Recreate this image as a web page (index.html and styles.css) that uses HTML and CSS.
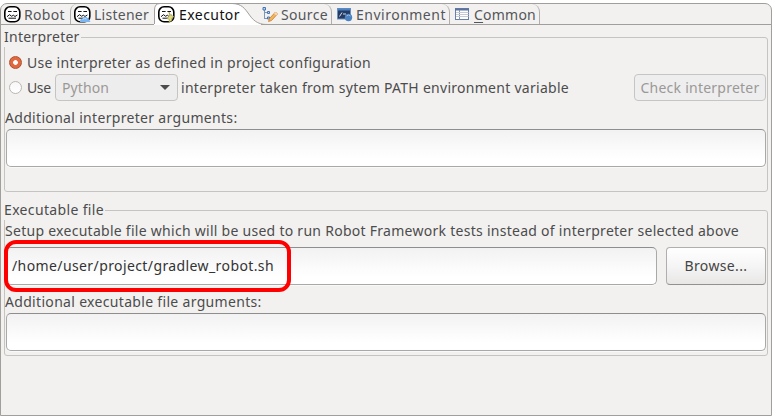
FILE: index.html
```html
<!DOCTYPE html>
<html lang="en">
<head>
<meta charset="utf-8">
<title>Executor</title>
<link rel="stylesheet" href="styles.css">
</head>
<body>
<svg class="defs" width="0" height="0">
  <symbol id="robot" viewBox="0 0 17 17">
    <rect x=".8" y=".8" width="15" height="15" rx="5.3" fill="#fff" stroke="#000" stroke-width="1.6"/>
    <path d="M4 5.500h3.600M9.400 5.500h3.600" fill="none" stroke="#111" stroke-width="1.100"/>
    <path d="M3 10.700 5.500 8.700l2.200 1.600 1.600-1.100 1.700 1.300 2.400-1.500M4.500 12.200h7.500" fill="none" stroke="#111"/>
  </symbol>
</svg>
<main class="panel">
  <nav class="tabs">
    <div class="tab robot"><svg class="icon" width="17" height="17"><use href="#robot"/></svg><span>Robot</span></div>
    <div class="tab before listener"><svg class="icon" width="17" height="17"><use href="#robot"/><path d="M6 16q-.5-3 2.500-3.500 1.500-2.500 4-1.500 1.500 1 2.500 2.500l1.500 2.500z" fill="#79b6f2"/><path d="M8.500 13.500q2-2 4-.5" fill="none" stroke="#c5e2ff"/></svg><span>Listener</span></div>
    <div class="tab executor">
      <svg class="shape" width="120" height="22" viewBox="0 0 120 22">
        <path d="M0 21V7Q0 1 6 1H79C97 1 92 21 113 21Z" fill="#fff"/>
        <path d="M0 21h107v1H0z" fill="#fff"/>
        <path d="M.5 21V7Q.5 .5 6 .5H78C97 .5 92 21.500 113 21.500" fill="none" stroke="#a19f9b"/>
      </svg>
      <svg class="icon" width="17" height="17"><use href="#robot"/><path d="m11 6 1.500 3 3.500 1.500-2.500 2 .5 1.500-3 2.500.5-3-2.500-1 2.500-3z" fill="#e0d87c" stroke="#a29c50" stroke-width=".7"/></svg><span>Executor</span>
    </div>
    <div class="tab after source"><svg class="icon" width="17" height="17"><path d="M3.500 4v9M4 6.500h3M4 12.500h3" fill="none" stroke="#7e95bd"/><path d="M2 1.500h2.500v2.500H2zM6.500 5.500h2v2h-2zM6.500 11h2v2h-2z" fill="#b9d4f3" stroke="#4675b2"/><path d="m8.500 12.500 6-6.500 2 2-6 6.500-3 1z" fill="#f4b458" stroke="#cb7a31" stroke-width=".8"/><path d="m13 7.500 2 2 1.700-1.600-2-2z" fill="#f4d6b4"/></svg><span>Source</span></div>
    <div class="tab after env"><svg class="icon" width="17" height="17"><rect x=".5" y="2.500" width="13" height="10.500" fill="#253b63" stroke="#6d91bf"/><path d="M1 3.500h12.500" stroke="#4a83c6" stroke-width="2"/><path d="m2.500 10.500 2.500-4M6 8h3" stroke="#d4e0ef" fill="none"/><circle cx="11.500" cy="11.500" r="3.700" fill="#4c82bf"/><path d="M9.500 10q2-2 4 0" stroke="#8fb8e2" fill="none"/></svg><span>Environment</span></div>
    <div class="tab after common"><svg class="icon" width="17" height="17"><rect x=".5" y="2.500" width="13" height="11" fill="#fff" stroke="#667eaa"/><path d="M0 3.500h14" stroke="#59729f" stroke-width="2"/><path d="M4.500 4v9.500" stroke="#8594af"/><path d="M1 6.500h12.500M1 8.500h12.500M1 10.500h12.500" stroke="#c5cbd6"/></svg><span><u>C</u>ommon</span></div>
  </nav>

  <fieldset class="group interpreter">
    <legend>Interpreter</legend>
    <label class="row first"><i class="radio on"></i><span class="t-project">Use interpreter as defined in project configuration</span></label>
    <div class="row second">
      <i class="radio"></i><span class="t-use">Use</span>
      <div class="combo"><span>Python</span><i class="arrow"></i></div>
      <span class="t-path">interpreter taken from sytem PATH environment variable</span>
      <button class="check" disabled>Check interpreter</button>
    </div>
    <div class="caption args">Additional interpreter arguments:</div>
    <div class="input"></div>
  </fieldset>

  <fieldset class="group executable">
    <legend>Executable file</legend>
    <div class="caption setup">Setup executable file which will be used to run Robot Framework tests instead of interpreter selected above</div>
    <div class="file">
      <div class="input"><span>/home/user/project/gradlew_robot.sh</span></div>
      <button class="browse">Browse...</button>
      <div class="highlight"></div>
    </div>
    <div class="caption args">Additional executable file arguments:</div>
    <div class="input"></div>
  </fieldset>
</main>
</body>
</html>
```
FILE: styles.css
```css
* { box-sizing: border-box; }
body {
  margin: 0;
  background: #fff;
  color: #4c4c4c;
  font: 14px/20px "Noto Sans", "Open Sans", sans-serif;
  letter-spacing: .3px;
  white-space: nowrap;
}
.defs { position: absolute; }
.panel {
  width: 772px;
  height: 413px;
  margin-top: 3px;
  border: 1px solid #a19f9b;
  border-radius: 7px 7px 0 0;
  background: #f2f1f0;
}
.tabs { display: flex; height: 21px; border-bottom: 1px solid #a19f9b; }
.tab { display: flex; align-items: center; height: 20px; color: #54565a; }
.tab span { line-height: 20px; padding-top: 2px; }
.icon { flex: none; display: block; margin-top: 1px; }
.robot { width: 69px; padding-left: 3px; gap: 3px; }
.before { border-left: 1px solid #b1afab; border-top-left-radius: 7px; }
.listener { width: 84px; padding-left: 3px; gap: 3px; letter-spacing: .26px; }
.executor { width: 107px; padding-left: 4px; gap: 4px; position: relative; color: #111; letter-spacing: .44px; }
.executor span, .executor .icon { position: relative; }
.shape { position: absolute; left: 0; top: -1px; }
.after { border-right: 1px solid #b1afab; border-top-right-radius: 8px; }
.source { width: 71px; padding-left: 0; gap: 3px; letter-spacing: .34px; }
.env { width: 118px; padding-left: 5px; gap: 2px; letter-spacing: .5px; }
.common { width: 90px; padding-left: 5px; gap: 2px; letter-spacing: .23px; }
u { text-underline-offset: 2px; }
.group {
  width: 764px;
  min-width: 0;
  margin: 3px 0 0 3px;
  padding: 0 1px;
  border: 1px solid #c6c4c1;
  border-radius: 3px;
}
legend { height: 19px; line-height: 18px; margin-left: -3px; padding: 0 1px; letter-spacing: .25px; }
.interpreter { height: 164px; }
.executable { height: 155px; margin-top: 9px; }
.executable legend { letter-spacing: .35px; }
.row { display: flex; align-items: center; }
.first { height: 24px; margin-top: 3px; padding-top: 1px; }
.second { height: 27px; }
.radio {
  flex: none;
  width: 13px;
  height: 13px;
  margin: 0 5px 0 3px;
  border: 1px solid #b9b7b4;
  border-radius: 50%;
  background: linear-gradient(#f7f7f7, #fff);
}
.radio.on {
  border-color: #ad512f;
  background: radial-gradient(circle, #fff 0 2px, #e5683d 2.7px, #d96b43 100%);
}
.t-project { letter-spacing: .277px; }
.t-use { width: 28px; letter-spacing: -.4px; }
.combo {
  display: flex;
  align-items: center;
  justify-content: space-between;
  width: 123px;
  height: 27px;
  margin-right: 3px;
  padding: 0 7px 0 6px;
  border: 1px solid #c5c4c2;
  border-radius: 4px;
  background: #eeeded;
  color: #9b9996;
  letter-spacing: .1px;
}
.arrow { border: 5px solid transparent; border-top-color: #4b4b4b; border-bottom: 0; }
.t-path { letter-spacing: .276px; }
button { padding: 0; font: inherit; }
.check {
  width: 132px;
  height: 27px;
  margin-left: auto;
  border: 1px solid #c6c5c5;
  border-radius: 4px;
  background: #eeeeef;
  color: #9b9996;
  letter-spacing: .237px;
}
.caption { height: 22px; line-height: 22px; margin-left: -1px; letter-spacing: .318px; }
.args { margin-top: 6px; }
.setup { letter-spacing: .273px; margin-bottom: 5px; }
.input {
  width: 760px;
  height: 38px;
  padding: 0 5px;
  border: 1px solid #a9a9a8;
  border-top-color: #8e8e8e;
  border-radius: 5px;
  background: linear-gradient(#f2f2f2, #fff 80%);
  box-shadow: 0 1px 0 #f9f9f9;
  color: #333;
  line-height: 35px;
}
.file { display: flex; position: relative; gap: 9px; }
.file .input { width: 651px; letter-spacing: .398px; }
.browse {
  width: 100px;
  height: 38px;
  border: 1px solid #b0afad;
  border-bottom-color: #929190;
  border-radius: 4px;
  background: linear-gradient(#fff, #f6f5f5 50%, #e8e7e6);
  color: #444;
  letter-spacing: .37px;
}
.highlight {
  position: absolute;
  left: -2px;
  top: -7px;
  width: 287px;
  height: 52px;
  border: 4px solid #f00;
  border-radius: 12px;
}
```
